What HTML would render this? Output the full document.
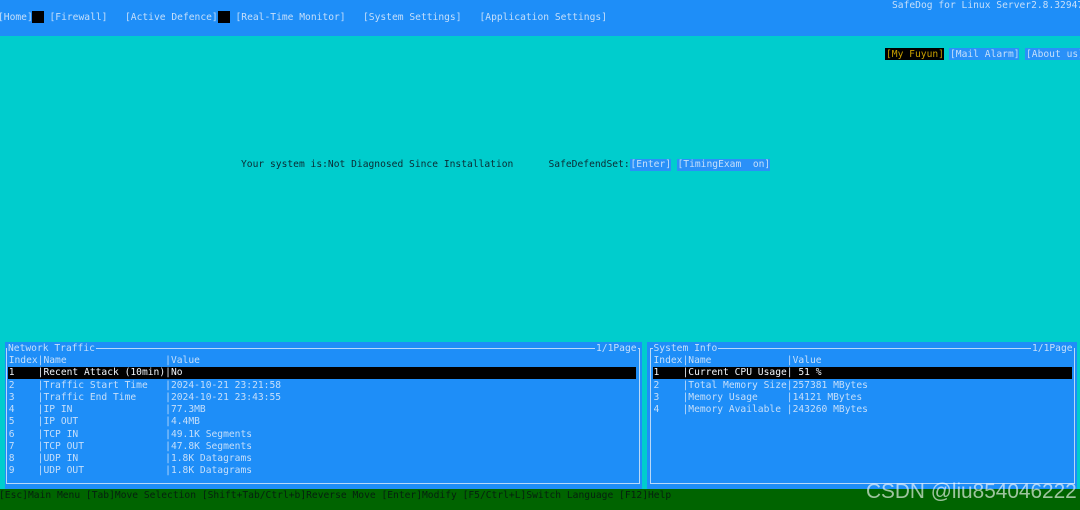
<!DOCTYPE html>
<html><head><meta charset="utf-8"><style>
html,body{margin:0;padding:0;background:#00cdcd}
#p{position:relative;width:1080px;height:510px;overflow:hidden;background:#00cdcd;font-family:"DejaVu Sans Mono","Liberation Mono",monospace;font-size:9.63px;line-height:12px;color:#c6dffa}
#p div{position:absolute}
.t{white-space:pre;filter:blur(.3px)}
.k{color:#0b2b33}
.b{background:#2a90f8;height:12px}
.bd{border:1px solid #b9d8f8;box-sizing:border-box}
.blk{background:#000}
.tb{background:#1e8ef8;padding:0 2px}
pre{margin:0;font:inherit;line-height:12.25px}
</style></head><body><div id="p">
<div style="left:0;top:0;width:1080px;height:36px;background:#1e8ef8"></div>
<div class="blk" style="left:31.5px;top:11px;width:12px;height:12px"></div>
<div class="blk" style="left:217.5px;top:11px;width:12px;height:12px"></div>
<div class="t" style="left:-2px;top:12px">[Home]</div>
<div class="t" style="left:49.5px;top:12px">[Firewall]</div>
<div class="t" style="left:125px;top:12px">[Active Defence]</div>
<div class="t" style="left:235.5px;top:12px">[Real-Time Monitor]</div>
<div class="t" style="left:363px;top:12px">[System Settings]</div>
<div class="t" style="left:479.5px;top:12px">[Application Settings]</div>
<div class="t" style="left:892px;top:0px">SafeDog for Linux Server2.8.32947</div>

<div class="blk" style="left:885px;top:48px;width:59px;height:12px"></div>
<div class="t" style="left:886px;top:49px;color:#c9a000">[My Fuyun]</div>
<div class="b" style="left:949px;top:48px;width:70px"></div>
<div class="t" style="left:950px;top:49px">[Mail Alarm]</div>
<div class="b" style="left:1025px;top:48px;width:55px"></div>
<div class="t" style="left:1026px;top:49px">[About us]</div>

<div class="t k" style="left:241px;top:159px">Your system is:Not Diagnosed Since Installation</div>
<div class="t k" style="left:548.5px;top:159px">SafeDefendSet:</div>
<div class="b" style="left:630px;top:159px;width:41px"></div>
<div class="t" style="left:630.5px;top:159px">[Enter]</div>
<div class="b" style="left:677px;top:159px;width:93px"></div>
<div class="t" style="left:677.5px;top:159px">[TimingExam  on]</div>

<div style="left:4.5px;top:342px;width:637.5px;height:147px;background:#1e8ef8"></div>
<div class="bd" style="left:5.5px;top:348px;width:634px;height:136px"></div>
<div class="tb t" style="left:7px;top:343px;padding:0 1px">Network Traffic</div>
<div class="tb t" style="left:595px;top:343px;padding:0 1px">1/1Page</div>
<div class="blk" style="left:8px;top:367px;width:628px;height:12px"></div>
<div class="t" style="left:8.7px;top:355px"><pre>Index|Name                 |Value
<span style="color:#f2f6fb">1    |Recent Attack (10min)|No</span>
2    |Traffic Start Time   |2024-10-21 23:21:58
3    |Traffic End Time     |2024-10-21 23:43:55
4    |IP IN                |77.3MB
5    |IP OUT               |4.4MB
6    |TCP IN               |49.1K Segments
7    |TCP OUT              |47.8K Segments
8    |UDP IN               |1.8K Datagrams
9    |UDP OUT              |1.8K Datagrams</pre></div>

<div style="left:647px;top:342px;width:430px;height:147px;background:#1e8ef8"></div>
<div class="bd" style="left:650px;top:348px;width:425px;height:136px"></div>
<div class="tb t" style="left:652.5px;top:343px;padding:0 1px">System Info</div>
<div class="tb t" style="left:1031px;top:343px;padding:0 1px">1/1Page</div>
<div class="blk" style="left:653px;top:367px;width:419px;height:12px"></div>
<div class="t" style="left:653.5px;top:355px"><pre>Index|Name             |Value
<span style="color:#f2f6fb">1    |Current CPU Usage| 51 %</span>
2    |Total Memory Size|257381 MBytes
3    |Memory Usage     |14121 MBytes
4    |Memory Available |243260 MBytes</pre></div>

<div style="left:0;top:489px;width:1080px;height:21px;background:#006400"></div>
<div class="t" style="left:-1px;top:490px;color:#06200f">[Esc]Main Menu [Tab]Move Selection [Shift+Tab/Ctrl+b]Reverse Move [Enter]Modify [F5/Ctrl+L]Switch Language [F12]Help</div>
<div class="t" style="left:866px;top:480px;font-family:'Liberation Sans',sans-serif;font-size:20.8px;line-height:24px;color:rgba(255,255,255,.62)">CSDN @liu854046222</div>
</div></body></html>
